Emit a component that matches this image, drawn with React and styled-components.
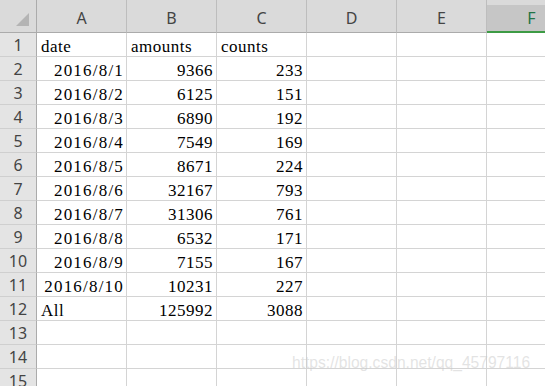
import React from "react";
import styled, { createGlobalStyle } from "styled-components";

const Global = createGlobalStyle`
  html, body { margin: 0; padding: 0; background: #ffffff; overflow: hidden; }
  #root { width: 545px; height: 386px; overflow: hidden; position: relative; }
`;

const Sheet = styled.div`
  display: grid;
  grid-template-columns: 37px repeat(5, 90px) 90px;
  grid-template-rows: 33px repeat(15, 24px);
  width: 587px;
`;

const Corner = styled.div`
  background: #dadada;
  border-right: 1px solid #ababab;
  border-bottom: 1px solid #ababab;
  box-sizing: border-box;
  display: flex;
  align-items: flex-end;
  justify-content: flex-end;
  padding: 0 7px 6px 0;
`;

const ColHead = styled.div`
  box-sizing: border-box;
  background: ${(p) => (p.$selected ? "linear-gradient(#dadada 0 5px, #c6c6c6 5px)" : "#dadada")};
  border-right: 1px solid ${(p) => (p.$selected ? "#dadada" : "#bdbdbd")};
  border-bottom: ${(p) => (p.$selected ? "2px solid #3d9b45" : "1px solid #ababab")};
  color: ${(p) => (p.$selected ? "#217346" : "#444444")};
  font-family: "Noto Sans", "Liberation Sans", sans-serif;
  font-size: 16px;
  display: flex;
  align-items: center;
  justify-content: center;
  padding-top: 4px;
`;

const RowHead = styled.div`
  box-sizing: border-box;
  background: #e4e4e4;
  border-right: 1px solid #ababab;
  border-bottom: 1px solid #cfcfcf;
  color: #444444;
  font-family: "Noto Sans", "Liberation Sans", sans-serif;
  font-size: 16px;
  display: flex;
  align-items: center;
  justify-content: center;
  padding-top: 1px;
`;

const Cell = styled.div`
  box-sizing: border-box;
  background: #ffffff;
  border-right: 1px solid #d4d4d4;
  border-bottom: 1px solid #d4d4d4;
  font-family: "Liberation Serif", "Times New Roman", serif;
  font-size: 17px;
  letter-spacing: ${(p) => (p.$date ? "1.2px" : "0.5px")};
  color: #000000;
  line-height: 17px;
  padding: 5px ${(p) => (p.$date ? "2px" : "3px")} 0 4px;
  text-align: ${(p) => (p.$right ? "right" : "left")};
  white-space: nowrap;
  overflow: hidden;
`;

const Watermark = styled.div`
  position: absolute;
  left: 292px;
  top: 354px;
  font-family: "Liberation Sans", Arial, sans-serif;
  font-size: 15.6px;
  color: rgba(200, 200, 200, 0.5);
  white-space: nowrap;
  pointer-events: none;
`;

const cols = ["A", "B", "C", "D", "E", "F"];

const data = [
  [{ t: "date" }, { t: "amounts" }, { t: "counts" }],
  ["2016/8/1", "9366", "233"],
  ["2016/8/2", "6125", "151"],
  ["2016/8/3", "6890", "192"],
  ["2016/8/4", "7549", "169"],
  ["2016/8/5", "8671", "224"],
  ["2016/8/6", "32167", "793"],
  ["2016/8/7", "31306", "761"],
  ["2016/8/8", "6532", "171"],
  ["2016/8/9", "7155", "167"],
  ["2016/8/10", "10231", "227"],
  [{ t: "All" }, "125992", "3088"],
];

export default function App() {
  const rows = [];
  for (let r = 0; r < 15; r++) {
    const rowData = data[r] || [];
    rows.push(<RowHead key={`rh${r}`}>{r + 1}</RowHead>);
    for (let c = 0; c < 6; c++) {
      const v = rowData[c];
      let text = "";
      let right = false;
      if (typeof v === "string") {
        text = v;
        right = true;
      } else if (v) {
        text = v.t;
      }
      rows.push(
        <Cell key={`c${r}-${c}`} $right={right} $date={right && text.includes("/")}>
          {text}
        </Cell>
      );
    }
  }
  return (
    <>
      <Global />
      <Sheet>
        <Corner>
          <svg width="13" height="13" viewBox="0 0 13 13">
            <polygon points="13,0 13,13 0,13" fill="#b4b4b4" />
          </svg>
        </Corner>
        {cols.map((c) => (
          <ColHead key={c} $selected={c === "F"}>
            {c}
          </ColHead>
        ))}
        {rows}
      </Sheet>
      <Watermark>https://blog.csdn.net/qq_45797116</Watermark>
    </>
  );
}
